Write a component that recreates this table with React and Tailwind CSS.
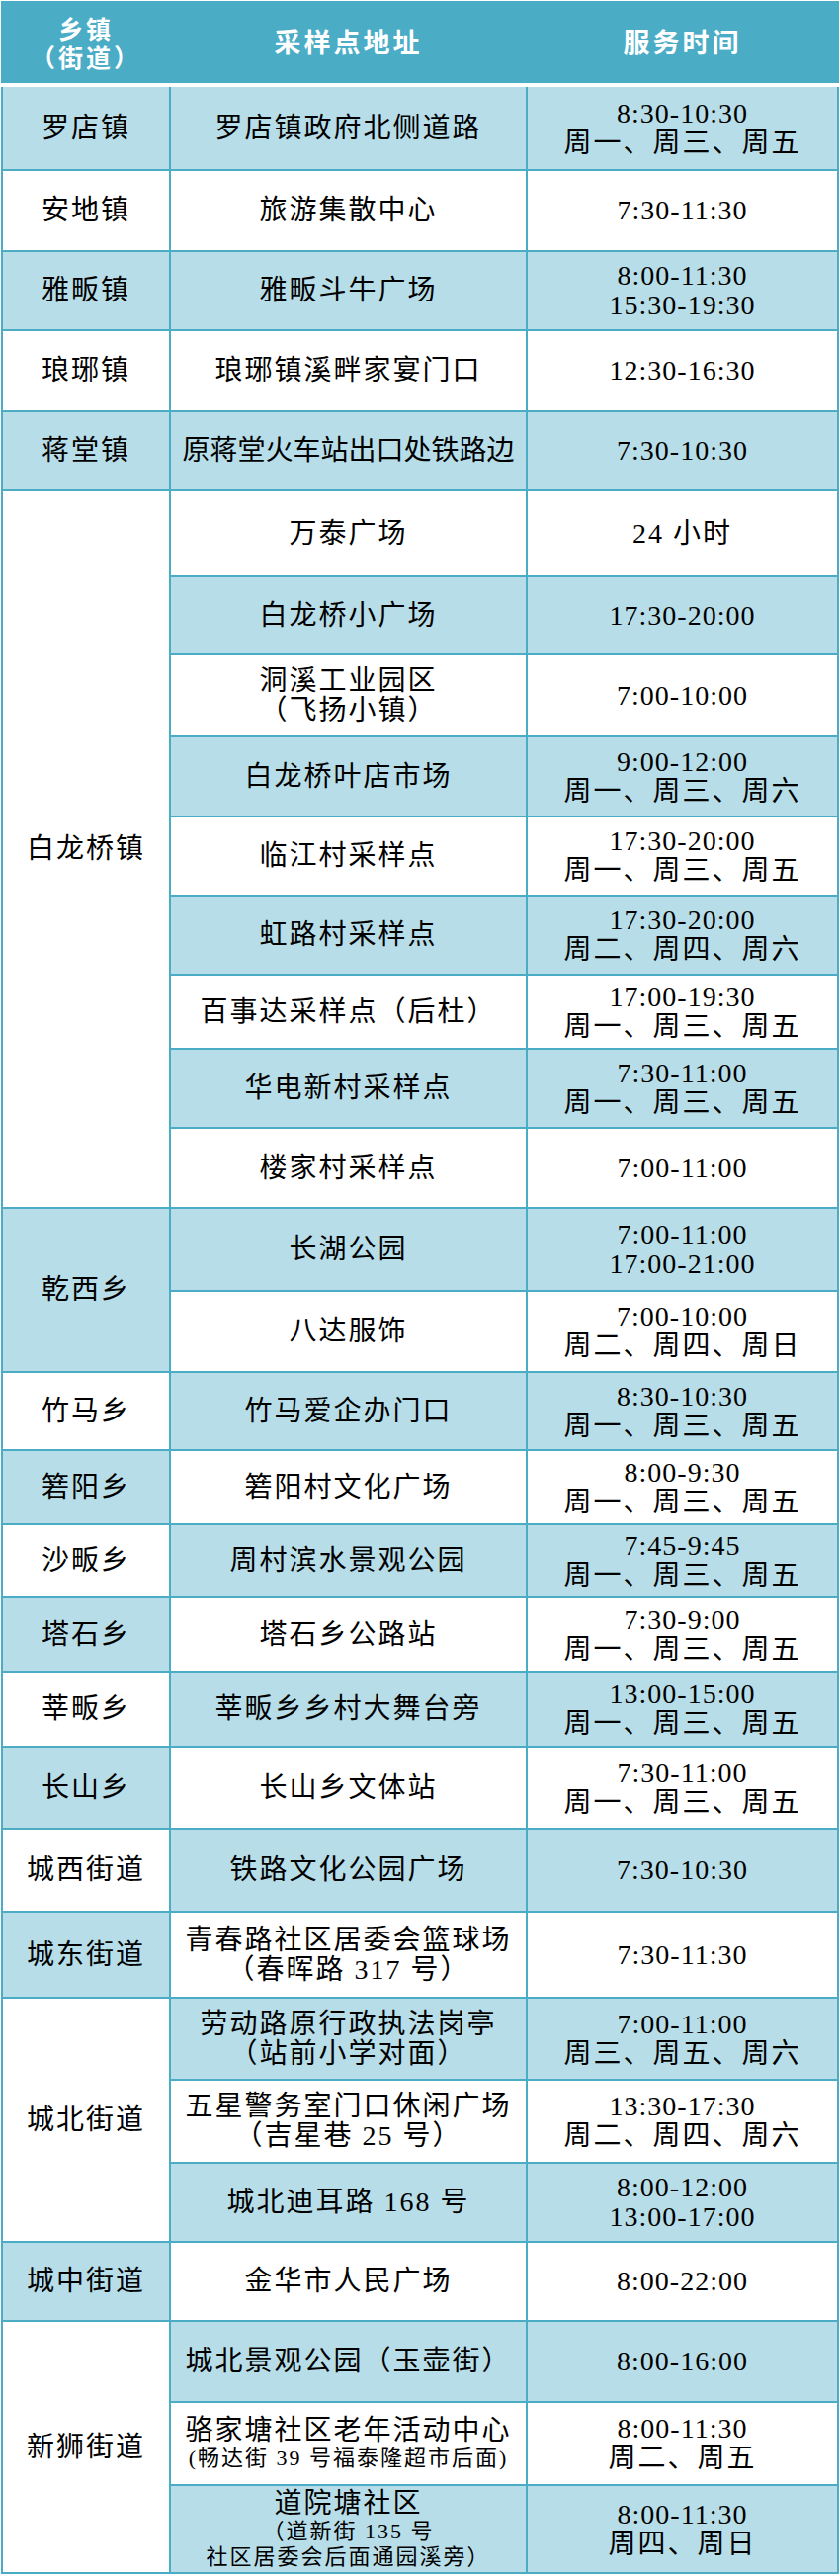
import React from 'react';

const groups = [
  { name: '罗店镇', rows: [[['罗店镇政府北侧道路'], ['8:30-10:30', '周一、周三、周五']]] },
  { name: '安地镇', rows: [[['旅游集散中心'], ['7:30-11:30']]] },
  { name: '雅畈镇', rows: [[['雅畈斗牛广场'], ['8:00-11:30', '15:30-19:30']]] },
  { name: '琅琊镇', rows: [[['琅琊镇溪畔家宴门口'], ['12:30-16:30']]] },
  { name: '蒋堂镇', rows: [[[{ t: '原蒋堂火车站出口处铁路边', tight: true }], ['7:30-10:30']]] },
  {
    name: '白龙桥镇',
    rows: [
      [['万泰广场'], ['24 小时']],
      [['白龙桥小广场'], ['17:30-20:00']],
      [['洞溪工业园区', '（飞扬小镇）'], ['7:00-10:00']],
      [['白龙桥叶店市场'], ['9:00-12:00', '周一、周三、周六']],
      [['临江村采样点'], ['17:30-20:00', '周一、周三、周五']],
      [['虹路村采样点'], ['17:30-20:00', '周二、周四、周六']],
      [['百事达采样点（后杜）'], ['17:00-19:30', '周一、周三、周五']],
      [['华电新村采样点'], ['7:30-11:00', '周一、周三、周五']],
      [['楼家村采样点'], ['7:00-11:00']],
    ],
  },
  {
    name: '乾西乡',
    rows: [
      [['长湖公园'], ['7:00-11:00', '17:00-21:00']],
      [['八达服饰'], ['7:00-10:00', '周二、周四、周日']],
    ],
  },
  { name: '竹马乡', rows: [[['竹马爱企办门口'], ['8:30-10:30', '周一、周三、周五']]] },
  { name: '箬阳乡', rows: [[['箬阳村文化广场'], ['8:00-9:30', '周一、周三、周五']]] },
  { name: '沙畈乡', rows: [[['周村滨水景观公园'], ['7:45-9:45', '周一、周三、周五']]] },
  { name: '塔石乡', rows: [[['塔石乡公路站'], ['7:30-9:00', '周一、周三、周五']]] },
  { name: '莘畈乡', rows: [[['莘畈乡乡村大舞台旁'], ['13:00-15:00', '周一、周三、周五']]] },
  { name: '长山乡', rows: [[['长山乡文体站'], ['7:30-11:00', '周一、周三、周五']]] },
  { name: '城西街道', rows: [[['铁路文化公园广场'], ['7:30-10:30']]] },
  { name: '城东街道', rows: [[['青春路社区居委会篮球场', '（春晖路 317 号）'], ['7:30-11:30']]] },
  {
    name: '城北街道',
    rows: [
      [['劳动路原行政执法岗亭', '（站前小学对面）'], ['7:00-11:00', '周三、周五、周六']],
      [['五星警务室门口休闲广场', '（吉星巷 25 号）'], ['13:30-17:30', '周二、周四、周六']],
      [['城北迪耳路 168 号'], ['8:00-12:00', '13:00-17:00']],
    ],
  },
  { name: '城中街道', rows: [[['金华市人民广场'], ['8:00-22:00']]] },
  {
    name: '新狮街道',
    rows: [
      [['城北景观公园（玉壶街）'], ['8:00-16:00']],
      [['骆家塘社区老年活动中心', { t: '(畅达街 39 号福泰隆超市后面)', small: true }], ['8:00-11:30', '周二、周五']],
      [
        ['道院塘社区', { t: '（道新街 135 号', small: true }, { t: '社区居委会后面通园溪旁）', small: true }],
        ['8:00-11:30', '周四、周日'],
      ],
    ],
  },
];

const spanClass = { 1: 'row-span-1', 2: 'row-span-2', 3: 'row-span-3', 9: 'row-span-9' };

function Line({ item }) {
  const o = typeof item === 'string' ? { t: item } : item;
  if (o.small) {
    return <div className="text-[22px] leading-[26px] tracking-[2px] whitespace-nowrap">{o.t}</div>;
  }
  const digits = /^[0-9:\-]+$/.test(o.t);
  const track = o.tight ? 'tracking-[0px]' : digits ? 'tracking-[1px]' : 'tracking-[2px]';
  return <div className={`text-[28px] leading-[30px] whitespace-nowrap ${track}`}>{o.t}</div>;
}

function Cell({ lines, blue, span = 1 }) {
  return (
    <div
      className={`${spanClass[span]} flex flex-col items-center justify-center text-center text-black ${
        blue ? 'bg-[#b7dde8]' : 'bg-white'
      }`}
    >
      {lines.map((l, i) => (
        <Line key={i} item={l} />
      ))}
    </div>
  );
}

export default function App() {
  let rowIndex = 0;
  const cells = [];
  groups.forEach((g, gi) => {
    g.rows.forEach((r, ri) => {
      if (ri === 0) {
        cells.push(<Cell key={`g${gi}`} lines={[g.name]} blue={gi % 2 === 0} span={g.rows.length} />);
      }
      const blue = rowIndex % 2 === 0;
      cells.push(<Cell key={`a${rowIndex}`} lines={r[0]} blue={blue} />);
      cells.push(<Cell key={`b${rowIndex}`} lines={r[1]} blue={blue} />);
      rowIndex++;
    });
  });

  return (
    <div className="w-[850px] bg-white px-px pt-px font-['Liberation_Serif','Noto_Sans_CJK_SC',serif]">
      <div className="grid h-[83px] grid-cols-[168px_359px_313px] gap-x-[2px] bg-[#4bacc6] px-[2px] font-['Noto_Sans_CJK_SC',sans-serif] font-bold text-white">
        <div className="flex items-center justify-center text-center text-[25px] leading-[29px] tracking-[3px]">
          <p>
            乡镇
            <br />
            （街道）
          </p>
        </div>
        <div className="flex items-center justify-center text-[27px] tracking-[3px]">采样点地址</div>
        <div className="flex items-center justify-center text-[27px] tracking-[3px]">服务时间</div>
      </div>
      <div className="h-[4px]" />
      <div className="grid grid-cols-[168px_359px_313px] grid-rows-[83px_80px_78px_80px_78px_85px_77px_81px_79px_78px_78px_73px_78px_79px_82px_80px_77px_73px_72px_73px_74px_81px_82px_85px_81px_82px_78px_78px_80px_82px_87px] gap-[2px] bg-[#4bacc6] px-[2px] pb-[2px]">
        {cells}
      </div>
    </div>
  );
}
